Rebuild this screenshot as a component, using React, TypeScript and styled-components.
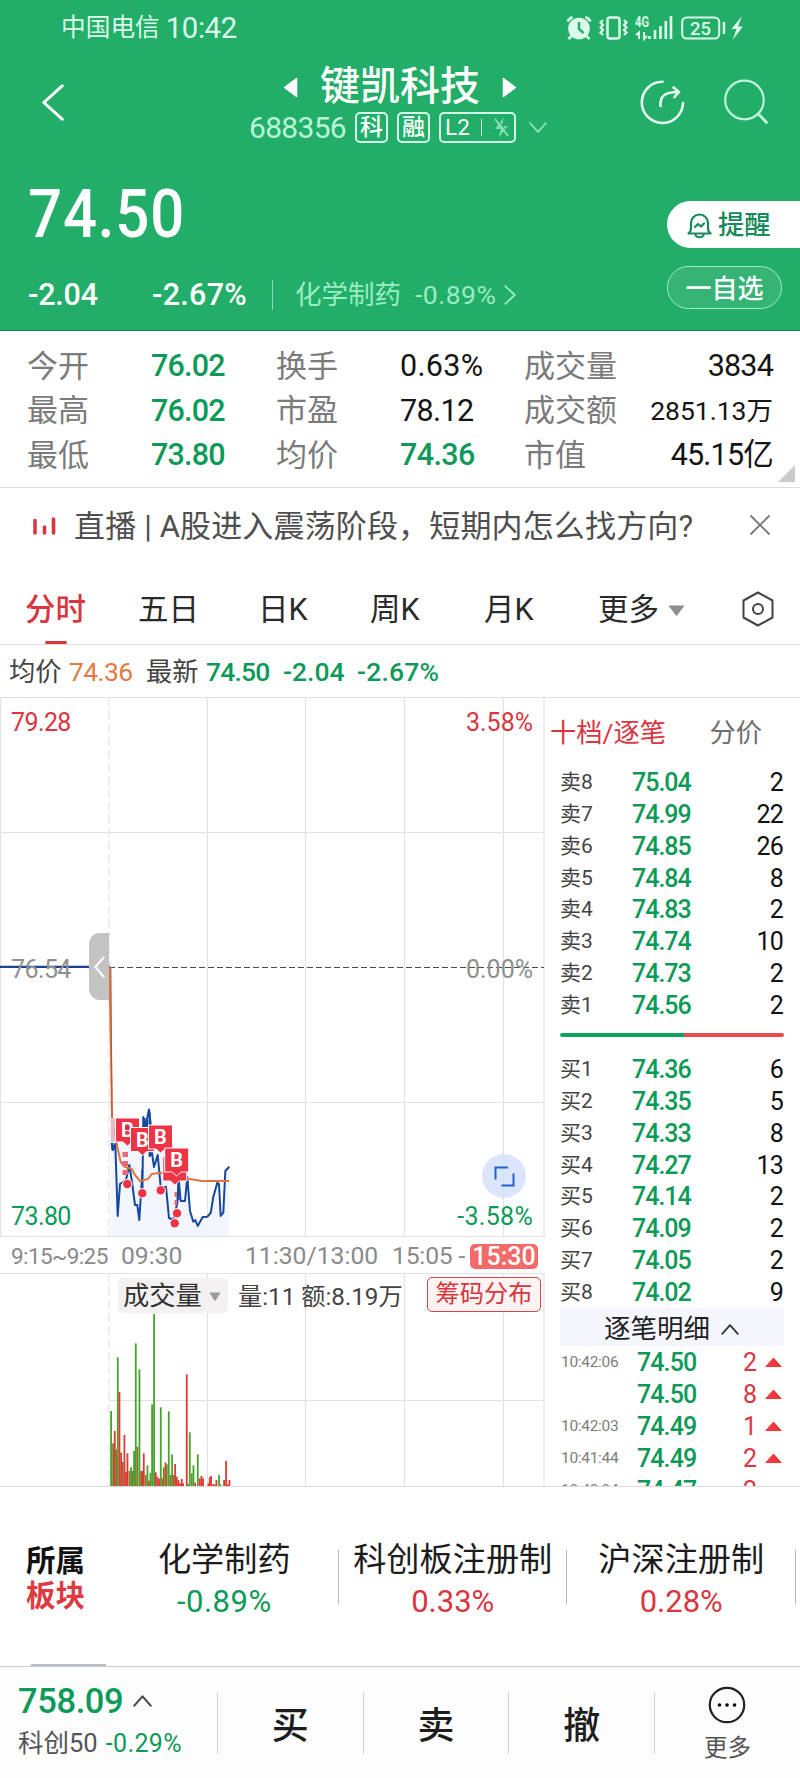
import React from "react";
import styled, { createGlobalStyle } from "styled-components";

const GREEN = "#0d9a58";
const RED = "#d9363f";

const Global = createGlobalStyle`
  * { box-sizing: border-box; }
  body { margin: 0; background: #fff; }
`;

const Screen = styled.div`
  width: 800px;
  height: 1778px;
  display: flex;
  flex-direction: column;
  overflow: hidden;
  background: #fff;
  color: #1d1d1d;
  font-family: Roboto, "Noto Sans CJK SC", sans-serif;
  line-height: 1;
  white-space: nowrap;
  svg { display: block; flex: none; }
`;

const Text = styled.span<{ $size: number; $color?: string; $weight?: number; $ls?: number }>`
  flex: none;
  font-size: ${(p) => p.$size}px;
  font-weight: ${(p) => p.$weight ?? 400};
  color: ${(p) => p.$color ?? "inherit"};
  letter-spacing: ${(p) => p.$ls ?? 0}px;
`;

/* ---------- header ---------- */
const Header = styled.header`
  height: 331px;
  background: #22ae68;
  border-bottom: 1px solid #14804a;
  color: #fff;
`;
const StatusBar = styled.div`
  height: 57px;
  padding: 0 56px 0 61px;
  display: flex;
  align-items: center;
  justify-content: space-between;
  color: #dcfbea;
`;
const StatusText = styled.div`
  display: flex;
  align-items: center;
  gap: 6px;
`;
const Nav = styled.div`
  height: 91px;
  display: grid;
  grid-template-columns: 200px 400px 200px;
`;
const NavBack = styled.div`
  padding: 27px 0 0 42px;
`;
const NavCenter = styled.div`
  display: flex;
  flex-direction: column;
  padding-top: 9px;
`;
const TitleRow = styled.div`
  height: 42px;
  display: flex;
  align-items: center;
  justify-content: center;
  gap: 22px;
`;
const CodeRow = styled.div`
  height: 33px;
  margin-top: 3px;
  padding-left: 49px;
  display: flex;
  align-items: center;
  gap: 9px;
`;
const Tag = styled.span<{ $w: number }>`
  width: ${(p) => p.$w}px;
  height: 31px;
  border: 2px solid #d5f9e7;
  border-radius: 5px;
  display: flex;
  align-items: center;
  justify-content: center;
  font-size: 23px;
  font-weight: 500;
`;
const NavIcons = styled.div`
  display: flex;
  gap: 38px;
  padding: 22px 0 0 39px;
`;
const Quote = styled.div`
  height: 182px;
  display: flex;
  justify-content: space-between;
`;
const QuoteLeft = styled.div`
  padding-left: 28px;
  padding-top: 33px;
`;
const Price = styled.div`
  width: 180px;
  height: 66px;
  font-size: 66.5px;
  font-weight: 500;
  letter-spacing: 1px;
  transform: scaleX(0.9);
  transform-origin: left;
`;
const ChangeRow = styled.div`
  height: 32px;
  margin-top: 32px;
  display: flex;
  align-items: center;
`;
const Cell = styled.span<{ $w: number; $pad?: number }>`
  width: ${(p) => p.$w}px;
  padding-left: ${(p) => p.$pad ?? 0}px;
  flex: none;
  display: flex;
  align-items: center;
`;
const Rule = styled.i<{ $h: number; $color: string }>`
  width: 1px;
  height: ${(p) => p.$h}px;
  background: ${(p) => p.$color};
  flex: none;
`;
const QuoteRight = styled.div`
  width: 133px;
  padding-top: 53px;
`;
const Remind = styled.div`
  height: 47px;
  border-radius: 24px 0 0 24px;
  background: #fff;
  color: #16895a;
  display: flex;
  align-items: center;
  gap: 6px;
  padding: 2px 0 0 20px;
`;
const Fav = styled.div`
  width: 115px;
  height: 43px;
  margin-top: 18px;
  padding-top: 2px;
  border: 1.5px solid #9fecc6;
  border-radius: 22px;
  background: #35b476;
  display: flex;
  align-items: center;
  justify-content: center;
`;

/* ---------- key figures ---------- */
const Stats = styled.section`
  position: relative;
  height: 157px;
  padding: 13px 27px 0 27px;
  border-bottom: 1px solid #dedede;
`;
const StatRow = styled.div`
  height: 44.5px;
  display: grid;
  grid-template-columns: 124px 125px 124px 124px 1fr;
  align-items: center;
`;
const StatLast = styled.div`
  display: flex;
  justify-content: space-between;
  align-items: center;
  width: 249px;
`;
const Corner = styled.i`
  position: absolute;
  right: 5px;
  bottom: 5px;
  border-left: 17px solid transparent;
  border-bottom: 17px solid #cbcbcb;
`;

/* ---------- banner, tabs ---------- */
const Banner = styled.section`
  height: 76px;
  padding: 0 29px 0 32px;
  display: flex;
  align-items: center;
  color: #4f4f4f;
`;
const BannerText = styled.div`
  flex: 1;
  padding: 0 0 0 17px;
`;
const CloseIcon = styled.svg`
  margin-bottom: 3px;
`;
const Tabs = styled.nav`
  height: 81px;
  border-bottom: 1px solid #dedede;
  display: flex;
  align-items: center;
  padding: 9px 0 0 25px;
  color: #2a2a2a;
  font-size: 30.5px;
`;
const Tab = styled.div<{ $w: number; $active?: boolean }>`
  position: relative;
  width: ${(p) => p.$w}px;
  padding-top: 3px;
  flex: none;
  display: flex;
  align-items: center;
  gap: 9px;
  color: ${(p) => (p.$active ? RED : "inherit")};
  font-weight: ${(p) => (p.$active ? 500 : 400)};
  &::after {
    content: "";
    display: ${(p) => (p.$active ? "block" : "none")};
    position: absolute;
    left: 20px;
    top: 49px;
    width: 22px;
    height: 3px;
    border-radius: 2px;
    background: ${RED};
  }
`;
const Legend = styled.div`
  height: 53px;
  border-bottom: 1px solid #e2e2e2;
  display: flex;
  align-items: center;
  padding: 2px 0 0 9px;
`;

/* ---------- chart area ---------- */
const Body = styled.section`
  height: 789px;
  display: flex;
  overflow: hidden;
  border-bottom: 1px solid #dcdcdc;
`;
const Left = styled.div`
  width: 545px;
`;
const PricePane = styled.div`
  position: relative;
  height: 538px;
`;
const Scale = styled.div`
  position: absolute;
  inset: 11px 12px 7px 11px;
  display: flex;
  flex-direction: column;
  justify-content: space-between;
`;
const ScaleRow = styled.div<{ $color: string }>`
  height: 26px;
  display: flex;
  align-items: center;
  justify-content: space-between;
  color: ${(p) => p.$color};
`;
const Handle = styled.div`
  position: absolute;
  left: 89px;
  top: 235px;
  width: 20px;
  height: 67px;
  border-radius: 11px 0 0 11px;
  background: #c3c3c3;
  display: flex;
  align-items: center;
  padding-left: 5px;
`;
const Expand = styled.div`
  position: absolute;
  left: 482px;
  top: 456px;
  width: 44px;
  height: 44px;
  border-radius: 50%;
  background: rgba(205, 221, 250, 0.75);
  display: flex;
  align-items: center;
  justify-content: center;
`;
const TimeAxis = styled.div`
  height: 38px;
  border-top: 1px solid #e2e2e2;
  border-bottom: 1px solid #e2e2e2;
  display: flex;
  align-items: center;
  padding-left: 11px;
  padding-top: 2px;
  color: #8a8a8a;
`;
const Now = styled.span`
  width: 68px;
  height: 25px;
  border-radius: 5px;
  background: #f36a69;
  color: #fff;
  display: flex;
  align-items: center;
  justify-content: center;
  font-size: 25px;
  font-weight: 500;
`;
const VolumePane = styled.div`
  position: relative;
  height: 212px;
`;
const VolumeHead = styled.div`
  position: absolute;
  inset: 3px 4px auto 118px;
  height: 37px;
  display: flex;
  align-items: center;
`;
const Indicator = styled.div`
  width: 110px;
  height: 35px;
  border-radius: 5px;
  background: #f3f1f2;
  display: flex;
  align-items: center;
  gap: 7px;
  padding: 2px 0 0 5px;
  margin-right: 10px;
`;
const VolumeText = styled(Text)`
  padding-top: 3px;
`;
const ChipButton = styled.div`
  margin: 0 0 2px auto;
  width: 114px;
  height: 35px;
  border: 1.5px solid #d8434c;
  border-radius: 5px;
  background: #fdf3f1;
  display: flex;
  align-items: center;
  justify-content: center;
`;

/* ---------- order book ---------- */
const Book = styled.div`
  width: 255px;
  padding: 0 16px 0 15px;
`;
const BookTabs = styled.div`
  height: 68px;
  margin-left: -10px;
  display: flex;
  align-items: center;
  justify-content: space-between;
  padding: 2px 22px 0 0;
`;
const Levels = styled.div`
  height: 255px;
  display: grid;
  grid-template-rows: repeat(8, 1fr);
`;
const Level = styled.div`
  display: grid;
  grid-template-columns: 72px 1fr auto;
  align-items: center;
  padding: 1px 1px 0 0;
`;
const Balance = styled.div`
  height: 32px;
  padding-top: 12px;
  &::before {
    content: "";
    display: block;
    height: 4px;
    border-radius: 2px;
    background: linear-gradient(90deg, #0ea35e 0 55.5%, #ec4a4c 55.5%);
  }
`;
const TicksHead = styled.div`
  height: 38px;
  background: #f6f6fe;
  display: flex;
  align-items: center;
  justify-content: center;
  gap: 11px;
  padding: 4px 1px 0 0;
`;
const Tick = styled.div`
  height: 31.9px;
  display: grid;
  grid-template-columns: 76px 1fr auto 17px;
  align-items: center;
  padding: 2px 2px 0 1px;
`;
const Qty = styled(Text)`
  padding-right: 8px;
`;
const Up = styled.i`
  border: 8.5px solid transparent;
  border-top: 0;
  border-bottom: 9px solid #f0383a;
`;

/* ---------- sectors ---------- */
const Sectors = styled.section`
  position: relative;
  height: 180px;
  border-bottom: 1px solid #c9cccf;
  display: flex;
  padding-top: 56px;
`;
const SectorTitle = styled.div`
  width: 110px;
  padding: 4px 0 0 26px;
  display: flex;
  flex-direction: column;
  gap: 5px;
`;
const Sector = styled.div`
  position: relative;
  width: 228.5px;
  flex: none;
  display: flex;
  flex-direction: column;
  align-items: center;
  gap: 10px;
  &::after {
    content: "";
    position: absolute;
    right: 0;
    top: 7px;
    width: 1px;
    height: 54px;
    background: #b9b9b9;
  }
`;
const ScrollMark = styled.i`
  position: absolute;
  left: 31px;
  bottom: 0;
  width: 75px;
  height: 2px;
  background: #b4bcc4;
`;

/* ---------- footer ---------- */
const Footer = styled.footer`
  height: 111px;
  background: #fefdfe;
  display: flex;
`;
const IndexBox = styled.div`
  width: 217px;
  padding: 17px 0 0 18px;
  display: flex;
  flex-direction: column;
  gap: 12px;
`;
const Line = styled.div<{ $gap: number }>`
  display: flex;
  align-items: center;
  gap: ${(p) => p.$gap}px;
`;
const Action = styled.div`
  width: 145.7px;
  display: flex;
  align-items: center;
  &::before {
    content: "";
    width: 1px;
    height: 62px;
    background: #d2d2d2;
  }
`;
const ActionBody = styled.div<{ $drop?: number }>`
  flex: 1;
  display: flex;
  flex-direction: column;
  align-items: center;
  gap: 13px;
  padding-top: ${(p) => p.$drop ?? 0}px;
`;

const Chevron = ({ w, h, dir, color, sw = 2 }: { w: number; h: number; dir: "left" | "right" | "up" | "down"; color: string; sw?: number }) => {
  const m = sw / 2 + 0.3;
  const pts = {
    left: `${w - m},${m} ${m},${h / 2} ${w - m},${h - m}`,
    right: `${m},${m} ${w - m},${h / 2} ${m},${h - m}`,
    up: `${m},${h - m} ${w / 2},${m} ${w - m},${h - m}`,
    down: `${m},${m} ${w / 2},${h - m} ${w - m},${m}`,
  }[dir];
  return (
    <svg width={w} height={h}>
      <polyline points={pts} fill="none" stroke={color} strokeWidth={sw} strokeLinecap="round" strokeLinejoin="round" />
    </svg>
  );
};

const Caret = ({ w, h, color }: { w: number; h: number; color: string }) => (
  <svg width={w} height={h}>
    <path d={`M0.5 0.5H${w - 0.5}L${w / 2 + 1} ${h - 1}Q${w / 2} ${h} ${w / 2 - 1} ${h - 1}Z`} fill={color} />
  </svg>
);

const StatusIcons = () => (
  <svg width="178" height="28" viewBox="566 14 178 28" fill="none" stroke="#dcfbea">
    <circle cx="579" cy="27.5" r="10.8" fill="#dcfbea" stroke="none" />
    <path d="M579 21v7l4.5 4" stroke="#22ae68" strokeWidth="2.4" />
    <path d="M567.5 20.5q1.5-3 5-4.5M590.5 20.5q-1.5-3-5-4.5M571.5 35l-3 3M586.5 35l3 3" strokeWidth="2.6" />
    <rect x="607.5" y="16.5" width="12" height="21" rx="2.5" strokeWidth="2.5" />
    <path d="M603 19l-2.5 2.5 2.5 2.5-2.5 2.5 2.5 2.5-2.5 2.5 2.5 2.5M624 19l2.5 2.5-2.5 2.5 2.5 2.5-2.5 2.5 2.5 2.5-2.5 2.5" strokeWidth="2.2" />
    <text x="635" y="25.5" fontSize="14.5" fontWeight="700" fill="#dcfbea" stroke="none" textLength="14" lengthAdjust="spacingAndGlyphs">4G</text>
    <path d="M639 38v-6.5l-3 2.5M644 31v7l3-3" strokeWidth="2" />
    <path d="M649.5 38v-3M655 38v-9M660.5 38V25M665.8 38V20M671 38V15" strokeWidth="2.6" />
    <rect x="682.2" y="16.5" width="37" height="21" rx="4.5" strokeWidth="2" />
    <text x="700.5" y="33.7" fontSize="18.5" fontWeight="500" fill="#dcfbea" stroke="none" textAnchor="middle">25</text>
    <path d="M724 21v12" strokeWidth="2.4" />
    <path d="M742 15L731.5 28h5L732.5 39 743 25.5h-5z" fill="#dcfbea" stroke="none" />
  </svg>
);

const ShareIcon = () => (
  <svg width="46" height="46" viewBox="639 79 46 46" fill="none" stroke="#e9fff4" strokeWidth="2.6" strokeLinecap="round" strokeLinejoin="round">
    <path d="M662.5 81.8A20.6 20.6 0 1 0 683 103" />
    <path d="M660.5 106c-.5-9 3-14 18-14M673.5 87.5l5.5 4.5-4.5 5" />
  </svg>
);

const SearchIcon = () => (
  <svg width="46" height="46" viewBox="723 79 46 46" fill="none" stroke="#c2f5db" strokeWidth="2.2" strokeLinecap="round">
    <circle cx="744.5" cy="100" r="19.3" />
    <path d="M759.5 115l7 7.5" strokeWidth="2.8" />
  </svg>
);

const BellIcon = () => (
  <svg width="25" height="26" viewBox="0 0 25 26" fill="none" stroke="#16895a" strokeWidth="2.2" strokeLinecap="round" strokeLinejoin="round">
    <path d="M1.5 20.5c2-1.5 2.5-3.5 2.5-6V10a8.5 8.5 0 0 1 17 0v4.5c0 2.5.5 4.5 2.5 6z" />
    <path d="M8.5 22c1 3 7 3 8 0M8 14l3-3 3 2.5 3-3" />
  </svg>
);

const FlashOff = () => (
  <svg width="17" height="21" viewBox="0 0 17 21" fill="none" stroke="#8fe5bb">
    <path d="M10.500 0.500L2 12h6l-2.500 8.500L15 9H9z" fill="#7fdcaf" stroke="none" />
    <path d="M2 2l13 17" strokeWidth="1.8" />
    <path d="M3.8 1.6l13 17" stroke="#22ae68" strokeWidth="1" />
  </svg>
);

const priceLine: number[][] = [
  [111.7, 1143], [112.7, 1150], [115.3, 1144], [117.7, 1216], [120, 1184], [126, 1180], [129.3, 1165], [131.7, 1180],
  [135, 1205], [137.3, 1205], [139.3, 1220], [142.7, 1167], [143.3, 1117], [145, 1126], [147.5, 1117], [149, 1109.5],
  [150.7, 1124], [149.5, 1156], [152, 1153], [154, 1167], [157.7, 1155], [160.7, 1187], [166, 1187], [169, 1218],
  [173.3, 1220], [177.3, 1203], [178.7, 1180], [180.7, 1201], [185, 1201], [187.3, 1177], [190, 1211], [193.3, 1221.7],
  [195.3, 1220], [197.7, 1226], [202.7, 1217], [207.3, 1216.7], [210.7, 1213], [213.3, 1197], [217.3, 1182.7],
  [219, 1184], [220.7, 1216], [223.3, 1212.7], [225.3, 1171], [229.3, 1166.7],
];
const avgLine: number[][] = [
  [109.5, 967], [112, 1117], [117.3, 1147], [120.7, 1162], [125, 1167], [131.7, 1169], [135, 1175], [140, 1181],
  [148, 1179], [151.7, 1174], [161, 1172.7], [168, 1176], [177, 1180], [188, 1178.7], [201.7, 1181], [229.3, 1181],
];
const path = (pts: number[][]) => pts.map(([x, y]) => `${x},${y}`).join(" ");

const Flag = ({ x, y, blank }: { x: number; y: number; blank?: boolean }) => (
  <g>
    <path d={`M${x} ${y}h24v24h-7.5l-4.5 4-4.5-4h-7.5z`} fill="#ee3344" stroke="#fff" strokeWidth="1" />
    {!blank && <text x={x + 12} y={y + 19} fontSize="20" fontWeight="700" fill="#fff" textAnchor="middle">B</text>}
  </g>
);

const PriceChart = () => (
  <svg width="545" height="538" viewBox="0 698 545 538">
    <g stroke="#e3e3e3" strokeWidth="1.2">
      <path d="M0.5 698V1236M207.5 698V1236M305.5 698V1236M404.5 698V1236M503.5 698V1236M544 698V1236M0 832.5H544M0 1102.5H544" />
      <path d="M109 698V1236" strokeDasharray="9 4" />
    </g>
    <polygon points={`111,1236 111,1118 143,1118 149,1110 151,1124 165,1150 188,1178 ${path(priceLine.slice(-14))} 229.3,1236`} fill="#f1f4fe" opacity=".85" />
    <path d="M109 967.5H544" stroke="#4a4a4a" strokeWidth="1" strokeDasharray="6 3" />
    <path d="M0 966.8H110" stroke="#1a4491" strokeWidth="2.2" />
    <polyline points={path(priceLine)} fill="none" stroke="#15489c" strokeWidth="2" strokeLinejoin="round" />
    <path d="M144.5 1118v16M147 1120v20M149.5 1112v26M112.5 1143v7M178.5 1182v18M142.5 1170v22" stroke="#15489c" strokeWidth="2" />
    <polyline points={path(avgLine)} fill="none" stroke="#e27440" strokeWidth="2" strokeLinejoin="round" />
    <path d="M110.8 967L112 1117" stroke="#b5603c" strokeWidth="1.2" />
    <rect x="110.7" y="1118" width="4" height="24" fill="#e6bcc6" />
    <g fill="#e8687a">
      <rect x="122.5" y="1152" width="5.5" height="5" />
      <rect x="122.5" y="1161" width="5.5" height="5" />
      <rect x="122.5" y="1170" width="5.5" height="5" />
      <rect x="174.5" y="1192" width="2.5" height="5" />
      <rect x="174.5" y="1200" width="2.5" height="5" />
    </g>
    <Flag x={115.5} y={1118} />
    <rect x="125" y="1126" width="4.5" height="4" fill="#c43350" />
    <Flag x={130.5} y={1127.5} />
    <Flag x={148.5} y={1125} />
    <Flag x={162.8} y={1157} blank />
    <Flag x={164.7} y={1148} />
    <g fill="#ee3344" stroke="#fff" strokeWidth="1">
      <circle cx="127.3" cy="1184" r="4.7" />
      <circle cx="142.3" cy="1193.3" r="4.7" />
      <circle cx="160.7" cy="1190.3" r="4.7" />
      <circle cx="174.7" cy="1223.3" r="4.7" />
      <circle cx="177" cy="1213.3" r="4.7" />
    </g>
  </svg>
);

const VG = "#45a32e";
const VR = "#dc3a34";
const VO = "#93702a";
const volumes: [number, number, string][] = [
  [333, 513, VG], [339, 610, VO], [344, 573, VR], [348, 628, VO], [353, 352, VG], [358, 456, VR], [363, 638, VR],
  [368, 665, VO], [373, 585, VR], [378, 695, VR], [382, 640, VR], [388, 693, VO], [393, 682, VG], [398, 693, VO],
  [402, 633, VG], [407, 310, VG], [412, 620, VO], [418, 388, VG], [423, 693, VO], [427, 693, VR], [431, 640, VR],
  [437, 705, VO], [442, 676, VG], [447, 722, VR], [451, 698, VG], [456, 493, VG], [462, 222, VG], [467, 697, VR],
  [472, 710, VR], [477, 716, VR], [482, 502, VG], [487, 715, VO], [491, 682, VO], [496, 667, VO], [500, 673, VO],
  [506, 514, VG], [511, 705, VO], [516, 643, VG], [520, 705, VO], [525, 672, VR], [530, 710, VR], [535, 720, VR],
  [540, 730, VR], [545, 717, VR], [549, 730, VR], [560, 403, VR], [564, 732, VG], [569, 577, VG], [575, 700, VG],
  [580, 676, VG], [585, 728, VR], [593, 643, VG], [599, 715, VR], [604, 708, VR], [609, 715, VR], [625, 730, VR],
  [629, 712, VR], [633, 708, VR], [639, 733, VR], [644, 733, VR], [649, 720, VR], [657, 705, VG], [661, 733, VG],
  [672, 720, VR], [678, 663, VR], [683, 733, VR], [688, 720, VR],
];

const VolumeChart = () => (
  <svg width="545" height="212" viewBox="0 1274 545 212">
    <g stroke="#e3e3e3" strokeWidth="1.2">
      <path d="M207.5 1274V1486M305.5 1274V1486M404.5 1274V1486M503.5 1274V1486M544 1274V1486M109 1400.5H544" />
      <path d="M109 1274V1486" strokeDasharray="9 4" />
    </g>
    {volumes.map(([x, top, color]) => (
      <rect key={x} x={x / 3 - 0.8} y={1240 + top / 3} width="1.8" height={(740 - top) / 3} fill={color} />
    ))}
  </svg>
);

const stats = [
  ["今开", "76.02", "换手", "0.63%", "成交量", "3834"],
  ["最高", "76.02", "市盈", "78.12", "成交额", "2851.13万"],
  ["最低", "73.80", "均价", "74.36", "市值", "45.15亿"],
];
const sells = [["卖8", "75.04", "2"], ["卖7", "74.99", "22"], ["卖6", "74.85", "26"], ["卖5", "74.84", "8"], ["卖4", "74.83", "2"], ["卖3", "74.74", "10"], ["卖2", "74.73", "2"], ["卖1", "74.56", "2"]];
const buys = [["买1", "74.36", "6"], ["买2", "74.35", "5"], ["买3", "74.33", "8"], ["买4", "74.27", "13"], ["买5", "74.14", "2"], ["买6", "74.09", "2"], ["买7", "74.05", "2"], ["买8", "74.02", "9"]];
const ticks = [["10:42:06", "74.50", "2"], ["", "74.50", "8"], ["10:42:03", "74.49", "1"], ["10:41:44", "74.49", "2"], ["10:40:04", "74.47", "2"]];

const LevelList = ({ rows }: { rows: string[][] }) => (
  <Levels>
    {rows.map(([label, price, qty]) => (
      <Level key={label}>
        <Text $size={21} $color="#444">{label}</Text>
        <Text $size={25} $color={GREEN} $weight={500} $ls={-1}>{price}</Text>
        <Text $size={25} $color="#111" $ls={-0.8}>{qty}</Text>
      </Level>
    ))}
  </Levels>
);

export default function App() {
  return (
    <Screen>
      <Global />
      <Header>
        <StatusBar>
          <StatusText>
            <Text $size={24.7}>中国电信</Text>
            <Text $size={29.3} $ls={-0.4}>10:42</Text>
          </StatusText>
          <StatusIcons />
        </StatusBar>
        <Nav>
          <NavBack><Chevron w={22} h={37} dir="left" color="#fff" sw={3} /></NavBack>
          <NavCenter>
            <TitleRow>
              <svg width="15" height="21"><path d="M13.5 1.5v18L1.5 10.5z" fill="#fff" stroke="#fff" strokeWidth="1.5" strokeLinejoin="round" /></svg>
              <Text $size={40} $weight={500}>键凯科技</Text>
              <svg width="15" height="21"><path d="M1.5 1.5v18l12-9z" fill="#fff" stroke="#fff" strokeWidth="1.5" strokeLinejoin="round" /></svg>
            </TitleRow>
            <CodeRow>
              <Text $size={30} $color="#b9f5d8" $ls={-0.7}>688356</Text>
              <Tag $w={33}>科</Tag>
              <Tag $w={33}>融</Tag>
              <Tag $w={77}>
                <Line $gap={11}>
                  <Text $size={22.5}>L2</Text>
                  <Rule $h={17} $color="#d5f9e7" />
                  <FlashOff />
                </Line>
              </Tag>
              <Cell $w={24} $pad={4}><Chevron w={18} h={11} dir="down" color="#8fe5bb" sw={1.6} /></Cell>
            </CodeRow>
          </NavCenter>
          <NavIcons><ShareIcon /><SearchIcon /></NavIcons>
        </Nav>
        <Quote>
          <QuoteLeft>
            <Price>74.50</Price>
            <ChangeRow>
              <Cell $w={124}><Text $size={30.5} $weight={500} $ls={-0.2}>-2.04</Text></Cell>
              <Cell $w={120}><Text $size={30.5} $weight={500} $ls={0.3}>-2.67%</Text></Cell>
              <Rule $h={30} $color="#8fe0b8" />
              <Cell $w={142} $pad={22}><Text $size={26.5} $color="#9cecc5">化学制药</Text></Cell>
              <Cell $w={89}><Text $size={26.5} $color="#9cecc5" $ls={0.5}>-0.89%</Text></Cell>
              <Chevron w={12} h={20} dir="right" color="#9cecc5" sw={1.8} />
            </ChangeRow>
          </QuoteLeft>
          <QuoteRight>
            <Remind><BellIcon /><Text $size={26.3} $weight={500}>提醒</Text></Remind>
            <Fav><Text $size={26} $weight={500}>一自选</Text></Fav>
          </QuoteRight>
        </Quote>
      </Header>

      <Stats>
        {stats.map(([a, av, b, bv, c, cv]) => (
          <StatRow key={a}>
            <Text $size={31} $color="#7b7b7b">{a}</Text>
            <Text $size={30.5} $weight={500} $color={GREEN} $ls={-0.8}>{av}</Text>
            <Text $size={31} $color="#7b7b7b">{b}</Text>
            <Text $size={30.5} $weight={bv === "74.36" ? 500 : 400} $color={bv === "74.36" ? GREEN : "#151515"} $ls={bv.endsWith("%") ? 0.3 : -0.6}>{bv}</Text>
            <StatLast>
              <Text $size={31} $color="#7b7b7b">{c}</Text>
              <Text $size={cv.length > 7 ? 26.5 : 30.5} $color="#151515" $ls={cv.length > 7 ? 0 : -0.8}>{cv}</Text>
            </StatLast>
          </StatRow>
        ))}
        <Corner />
      </Stats>

      <Banner>
        <svg width="25" height="18" stroke={RED} strokeWidth="3.6" strokeLinecap="round">
          <path d="M3 3.5V16M12.5 10V16M21.5 2V16" />
        </svg>
        <BannerText><Text $size={31} $ls={0.15}>直播 | A股进入震荡阶段，短期内怎么找方向?</Text></BannerText>
        <CloseIcon width="22" height="22" stroke="#777" strokeWidth="1.8"><path d="M1.5 1.5l19 19M20.5 1.5l-19 19" /></CloseIcon>
      </Banner>

      <Tabs>
        <Tab $w={113} $active>分时</Tab>
        <Tab $w={120}>五日</Tab>
        <Tab $w={112}>日K</Tab>
        <Tab $w={114}>周K</Tab>
        <Tab $w={114}>月K</Tab>
        <Tab $w={143}>更多 <Caret w={17} h={11} color="#8e8e8e" /></Tab>
        <svg width="34" height="36" fill="none" stroke="#444" strokeWidth="2" strokeLinejoin="round">
          <path d="M17 1.5L31.5 9.5V26.5L17 34.5L2.5 26.5V9.5Z" />
          <circle cx="17" cy="18" r="5" />
        </svg>
      </Tabs>

      <Legend>
        <Cell $w={60}><Text $size={26.3} $color="#444">均价</Text></Cell>
        <Cell $w={77}><Text $size={26.5} $color="#e27b45" $ls={-0.6}>74.36</Text></Cell>
        <Cell $w={60}><Text $size={26.3} $color="#444">最新</Text></Cell>
        <Cell $w={77}><Text $size={26.5} $weight={500} $color={GREEN} $ls={-0.8}>74.50</Text></Cell>
        <Cell $w={74}><Text $size={26.5} $weight={500} $color={GREEN}>-2.04</Text></Cell>
        <Text $size={26.5} $weight={500} $color={GREEN} $ls={0.2}>-2.67%</Text>
      </Legend>

      <Body>
        <Left>
          <PricePane>
            <Scale>
              <ScaleRow $color={RED}><Text $size={25} $ls={-0.6}>79.28</Text><Text $size={25}>3.58%</Text></ScaleRow>
              <ScaleRow $color="#8f8f8f"><Text $size={25} $ls={-0.6}>76.54</Text><Text $size={25}>0.00%</Text></ScaleRow>
              <ScaleRow $color={GREEN}><Text $size={25} $ls={-0.6}>73.80</Text><Text $size={25} $ls={0.3}>-3.58%</Text></ScaleRow>
            </Scale>
            <PriceChart />
            <Handle><Chevron w={11} h={22} dir="left" color="#fff" sw={2} /></Handle>
            <Expand>
              <svg width="21" height="21" fill="none" stroke="#2262cc" strokeWidth="2"><path d="M1.5 13.5V1.5H14M19.5 7.5V19.5H7.5" /></svg>
            </Expand>
          </PricePane>
          <TimeAxis>
            <Cell $w={110}><Text $size={22.5} $ls={-0.6}>9:15~9:25</Text></Cell>
            <Cell $w={124}><Text $size={24.7}>09:30</Text></Cell>
            <Cell $w={147}><Text $size={24.7}>11:30/13:00</Text></Cell>
            <Cell $w={78}><Text $size={24.7} $ls={-0.2}>15:05 -</Text></Cell>
            <Now>15:30</Now>
          </TimeAxis>
          <VolumePane>
            <VolumeChart />
            <VolumeHead>
              <Indicator><Text $size={26.3} $color="#333">成交量</Text><Caret w={12} h={9} color="#999" /></Indicator>
              <VolumeText $size={24.2} $color="#444">量:11 额:8.19万</VolumeText>
              <ChipButton><Text $size={24.2} $color={RED}>筹码分布</Text></ChipButton>
            </VolumeHead>
          </VolumePane>
        </Left>

        <Book>
          <BookTabs>
            <Text $size={26.3} $color={RED}>十档/逐笔</Text>
            <Text $size={26.3} $color="#6e6e6e">分价</Text>
          </BookTabs>
          <LevelList rows={sells} />
          <Balance />
          <LevelList rows={buys} />
          <TicksHead><Text $size={26.5} $color="#1f1f1f">逐笔明细</Text><Chevron w={18} h={11} dir="up" color="#333" sw={1.8} /></TicksHead>
          {ticks.map(([time, price, qty], i) => (
            <Tick key={i}>
              <Text $size={15.5} $color="#7d7d7d" $ls={-0.3}>{time}</Text>
              <Text $size={25} $weight={500} $color={GREEN} $ls={-0.9}>{price}</Text>
              <Qty $size={25} $color={RED}>{qty}</Qty>
              <Up />
            </Tick>
          ))}
        </Book>
      </Body>

      <Sectors>
        <SectorTitle>
          <Text $size={29.5} $weight={700} $color="#111">所属</Text>
          <Text $size={29.5} $weight={700} $color="#dc3b42">板块</Text>
        </SectorTitle>
        {[["化学制药", "-0.89%"], ["科创板注册制", "0.33%"], ["沪深注册制", "0.28%"]].map(([n, v]) => (
          <Sector key={n}>
            <Text $size={33.2} $color="#1c1c1c">{n}</Text>
            <Text $size={31} $color={v[0] === "-" ? GREEN : RED} $ls={v[0] === "-" ? 0.5 : 0}>{v}</Text>
          </Sector>
        ))}
        <ScrollMark />
      </Sectors>

      <Footer>
        <IndexBox>
          <Line $gap={10}>
            <Text $size={34.5} $weight={500} $color={GREEN} $ls={-0.4}>758.09</Text>
            <Chevron w={19} h={12} dir="up" color="#444" sw={2} />
          </Line>
          <Line $gap={8}>
            <Text $size={25.5} $color="#555">科创50</Text>
            <Text $size={25} $color={GREEN} $ls={0.4}>-0.29%</Text>
          </Line>
        </IndexBox>
        {["买", "卖", "撤"].map((t) => (
          <Action key={t}><ActionBody $drop={8}><Text $size={37} $weight={500}>{t}</Text></ActionBody></Action>
        ))}
        <Action>
          <ActionBody $drop={2}>
            <svg width="38" height="38"><circle cx="19" cy="19" r="17.2" fill="none" stroke="#222" strokeWidth="2.2" /><circle cx="11.5" cy="19" r="1.8" /><circle cx="19" cy="19" r="1.8" /><circle cx="26.5" cy="19" r="1.8" /></svg>
            <Text $size={23.5} $color="#555">更多</Text>
          </ActionBody>
        </Action>
      </Footer>
    </Screen>
  );
}
